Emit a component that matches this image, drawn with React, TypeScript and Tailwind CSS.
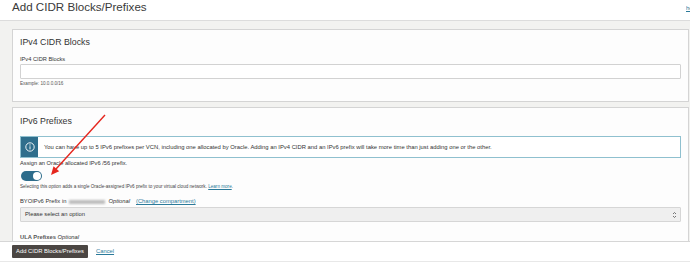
import React from "react";

export default function App() {
  return (
    <div
      className="relative w-[690px] h-[266px] overflow-hidden bg-white text-[#333]"
      style={{ fontFamily: '"Liberation Sans", Arial, sans-serif' }}
    >
      {/* Header */}
      <div className="h-[21px] border-b border-[#dcdcdc] flex items-start pl-[12px] bg-white overflow-hidden">
        <div className="text-[11.6px] leading-[12px] pt-[1px] text-[#3a3a3a] whitespace-nowrap">
          Add CIDR Blocks/Prefixes
        </div>
        <div className="ml-auto w-[4px] overflow-hidden whitespace-nowrap text-[6px] leading-[8px] pt-[4px] text-[#2b7a9a] underline">
          help
        </div>
      </div>

      {/* Main */}
      <div className="h-[220px] overflow-hidden bg-[#f2f2f0] pl-[12px] pr-[1px] pt-[8px]">
        {/* IPv4 panel */}
        <div className="h-[73px] border border-[#d4d4d4] bg-[#fdfdfd] px-[7px] pt-[7px]">
          <div className="text-[8.8px] leading-[11px] text-[#333]">IPv4 CIDR Blocks</div>
          <div className="mt-[8px] text-[5.7px] leading-[7px] text-[#333]">IPv4 CIDR Blocks</div>
          <div className="mt-[1px] h-[15px] border border-[#d2d2d2] bg-white rounded-[1px]" />
          <div className="mt-[2px] text-[4.6px] leading-[6px] text-[#555]">Example: 10.0.0.0/16</div>
        </div>

        {/* IPv6 panel */}
        <div className="mt-[5px] h-[200px] border border-[#d4d4d4] bg-[#fdfdfd] px-[7px] pt-[8px]">
          <div className="text-[8.8px] leading-[11px] text-[#333]">IPv6 Prefixes</div>

          <div className="mt-[9px] h-[22px] flex border border-[#8fc0cf] bg-white">
            <div className="w-[17px] bg-[#2f6e8c] flex items-center justify-center">
              <svg width="10" height="10" viewBox="0 0 10 10">
                <circle cx="5" cy="5" r="4.2" fill="none" stroke="#fff" strokeWidth="0.9" />
                <line x1="5" y1="4.3" x2="5" y2="7.4" stroke="#fff" strokeWidth="0.9" />
                <circle cx="5" cy="2.9" r="0.55" fill="#fff" />
              </svg>
            </div>
            <div className="flex items-center pl-[6px] text-[5.85px] leading-[7px] text-[#333] whitespace-nowrap">
              You can have up to 5 IPv6 prefixes per VCN, including one allocated by Oracle. Adding an IPv4 CIDR and an IPv6 prefix will take more time than just adding one or the other.
            </div>
          </div>

          <div className="mt-[2px] text-[5.7px] leading-[7px] text-[#333]">
            Assign an Oracle allocated IPv6 /56 prefix.
          </div>

          <div className="mt-[4px] ml-[1px] w-[21px] h-[10px] rounded-full bg-[#2d6c8b] flex items-center justify-end pr-[1px]">
            <div className="w-[8px] h-[8px] rounded-full bg-white" />
          </div>

          <div className="mt-[3px] text-[4.6px] leading-[6px] text-[#444] whitespace-nowrap">
            Selecting this option adds a single Oracle-assigned IPv6 prefix to your virtual cloud network.{" "}
            <span className="text-[#2b7a9a] underline">Learn more</span>.
          </div>

          <div className="mt-[8px] flex items-center text-[5.8px] leading-[7px] text-[#333] whitespace-nowrap">
            <span>BYOIPv6 Prefix in</span>
            <span className="inline-block w-[36px] h-[4px] mx-[3px] bg-[#bdbdbd] blur-[1px]" />
            <span className="italic">Optional</span>
            <span className="ml-[6px] text-[#2b7a9a] underline">(Change compartment)</span>
          </div>

          <div className="mt-[2px] h-[15px] border border-[#d6d6d6] bg-[#efefef] flex items-center pl-[4px] pr-[3px] rounded-[1px]">
            <span className="text-[5.8px] leading-[7px] text-[#333]">Please select an option</span>
            <svg className="ml-auto" width="5" height="8" viewBox="0 0 5 8">
              <path d="M1 3 L2.5 1.5 L4 3" fill="none" stroke="#555" strokeWidth="0.8" />
              <path d="M1 5 L2.5 6.5 L4 5" fill="none" stroke="#555" strokeWidth="0.8" />
            </svg>
          </div>

          <div className="mt-[12px] text-[5.8px] leading-[7px] text-[#333] whitespace-nowrap">
            <span className="font-bold text-[#555]">ULA Prefixes</span>{" "}
            <span className="italic">Optional</span>
          </div>
        </div>
      </div>

      {/* Footer */}
      <div className="h-[21px] border-t border-b border-t-[#d6d6d6] border-b-[#e8e8e8] bg-white flex items-start pl-[12px] pt-[3px]">
        <div className="h-[13px] w-[76px] bg-[#4b4643] rounded-[1px] flex items-center justify-center text-white text-[5.85px] leading-[7px] whitespace-nowrap">
          Add CIDR Blocks/Prefixes
        </div>
        <div className="ml-[8px] h-[13px] flex items-center text-[5.8px] leading-[7px] text-[#2b7a9a] underline">
          Cancel
        </div>
      </div>

      {/* Red annotation arrow */}
      <svg className="absolute left-0 top-0 pointer-events-none" width="690" height="266" viewBox="0 0 690 266">
        <line x1="105" y1="115" x2="56" y2="169" stroke="#e5261e" strokeWidth="1.4" />
        <polygon points="51,175 59.2,171.3 53.5,166.3" fill="#e5261e" />
      </svg>
    </div>
  );
}
